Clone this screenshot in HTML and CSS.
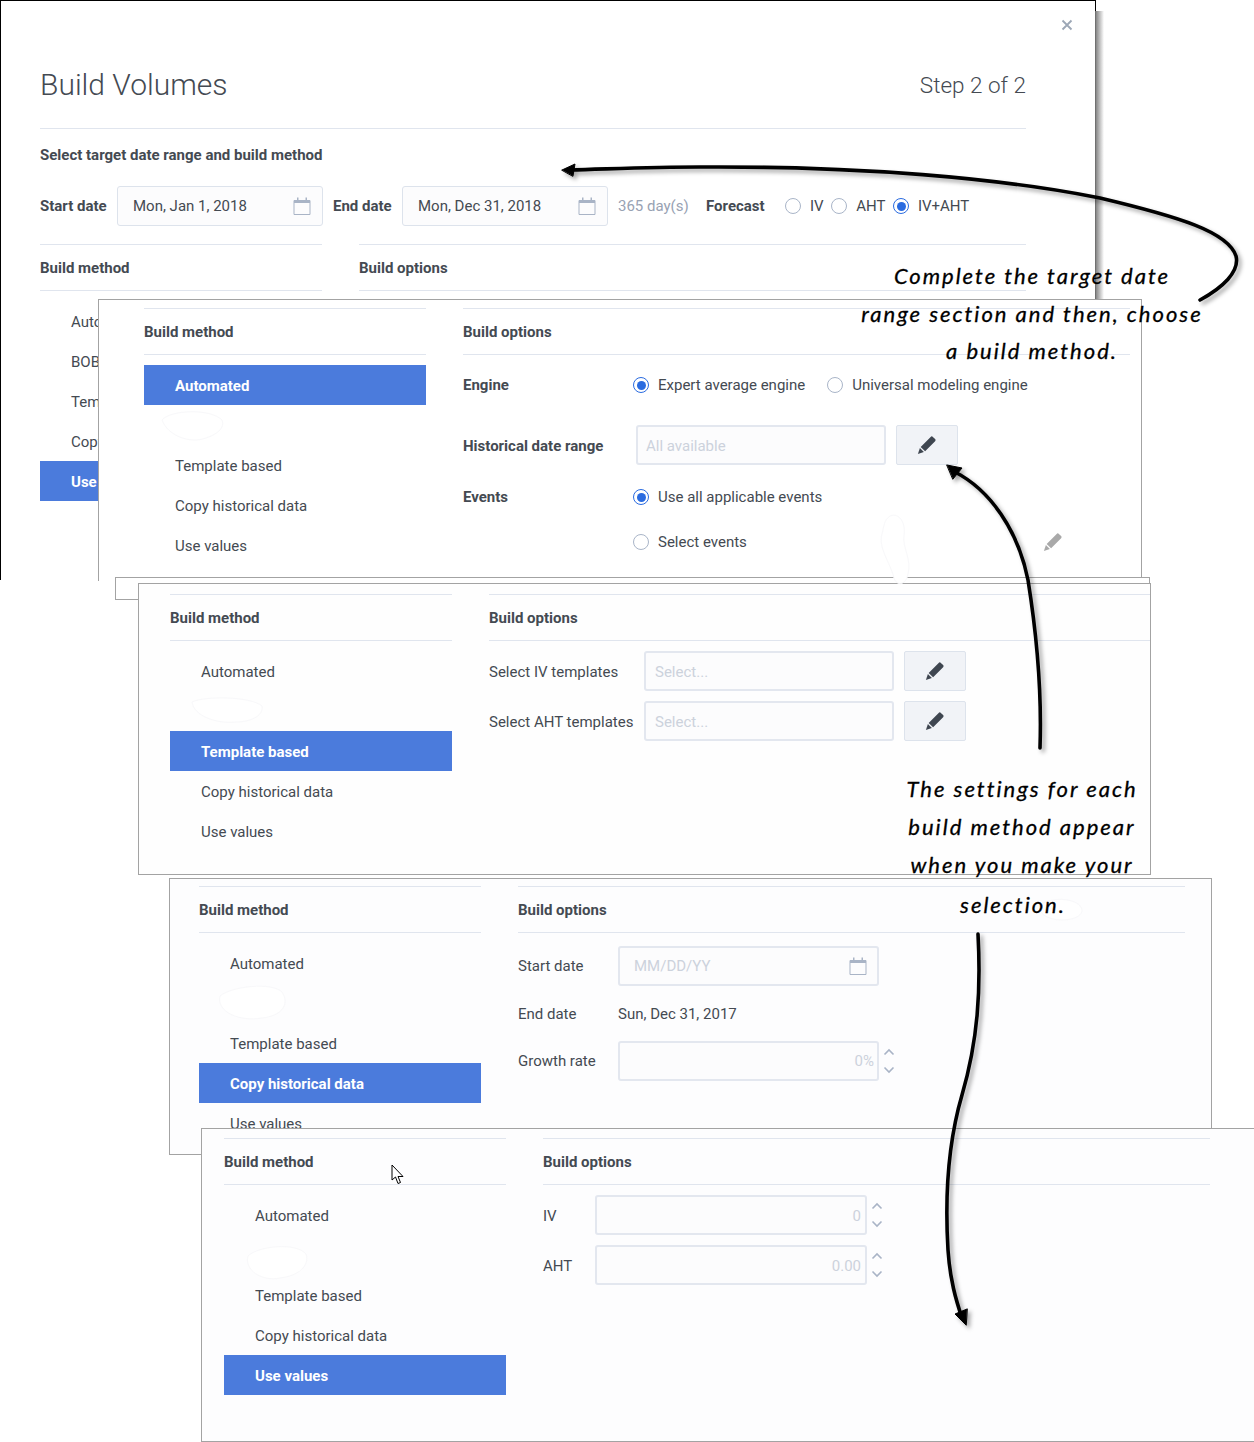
FILE: index.html
```html
<!DOCTYPE html>
<html lang="en">
<head>
  <meta charset="UTF-8">
  <title>Build Volumes</title>
  <link rel="stylesheet" href="styles.css">
</head>
<body>

<svg class="defs" width="0" height="0">
  <symbol id="pencil" viewBox="0 0 18 18">
    <path d="M3.300 10.700 12.300 1.700Q13.300 0.700 14.300 1.700L16.300 3.700Q17.300 4.700 16.300 5.700L7.300 14.700Z"/>
    <path d="M2.600 11.800 6.200 15.400 0.800 17.200Z"/>
  </symbol>
  <symbol id="calendar" viewBox="0 0 18 18">
    <path d="M1 3.500H17V17.500H1Z" fill="none" stroke="currentColor"/>
    <path d="M1 3H4V0.500H5.500V3H12.500V0.500H14V3H17V6H1Z" fill="currentColor"/>
  </symbol>
  <symbol id="spin" viewBox="0 0 12 30">
    <path d="M1.500 8.500 6 4 10.500 8.500M1.500 21.500 6 26 10.500 21.500" fill="none" stroke="currentColor" stroke-width="1.600"/>
  </symbol>
</svg>

<div class="canvas">

  <!-- first dialog, the others are stacked over it -->
  <div class="panel panel-main">
    <div class="close-row">
      <svg class="close" width="12" height="12" viewBox="0 0 12 12"><path d="M1.500 1.500 10.500 10.500M10.500 1.500 1.500 10.500"/></svg>
    </div>
    <div class="title-row">
      <h1>Build Volumes</h1>
      <span class="step">Step 2 of 2</span>
    </div>
    <div class="subtitle">Select target date range and build method</div>
    <div class="date-row">
      <b class="date-label">Start date</b>
      <div class="field date-field"><span>Mon, Jan 1, 2018</span><svg class="cal"><use href="#calendar"/></svg></div>
      <b class="date-label end-label">End date</b>
      <div class="field date-field"><span>Mon, Dec 31, 2018</span><svg class="cal"><use href="#calendar"/></svg></div>
      <span class="days">365 day(s)</span>
      <b class="forecast">Forecast</b>
      <span class="radio first"></span><span class="radio-text">IV</span>
      <span class="radio tight"></span><span class="radio-text">AHT</span>
      <span class="radio on tight"></span><span class="radio-text">IV+AHT</span>
    </div>
    <div class="build">
      <div>
        <div class="col-head">Build method</div>
        <ul class="methods">
          <li>Automated</li>
          <li>BOB</li>
          <li>Template based</li>
          <li>Copy historical data</li>
          <li class="active">Use values</li>
        </ul>
      </div>
      <div>
        <div class="col-head">Build options</div>
      </div>
    </div>
  </div>

  <div class="panel panel-auto">
    <div class="build">
      <div>
        <div class="col-head">Build method</div>
        <ul class="methods">
          <li class="active">Automated</li>
          <li></li>
          <li>Template based</li>
          <li>Copy historical data</li>
          <li>Use values</li>
        </ul>
      </div>
      <div>
        <div class="col-head">Build options</div>
        <div class="opt-row">
          <b class="opt-label wide">Engine</b>
          <span class="radio on"></span><span class="radio-text">Expert average engine</span>
          <span class="radio gap"></span><span class="radio-text">Universal modeling engine</span>
        </div>
        <div class="opt-row spaced">
          <b class="opt-label hist">Historical date range</b>
          <div class="field ph">All available</div>
          <button class="edit"><svg><use href="#pencil"/></svg></button>
        </div>
        <div class="opt-row near">
          <b class="opt-label wide">Events</b>
          <span class="radio on"></span><span class="radio-text">Use all applicable events</span>
        </div>
        <div class="opt-row nearer">
          <span class="opt-label wide"></span>
          <span class="radio"></span><span class="radio-text">Select events</span>
          <svg class="pencil-off"><use href="#pencil"/></svg>
        </div>
      </div>
    </div>
  </div>

  <div class="panel panel-back"></div>

  <div class="panel panel-template">
    <div class="build">
      <div>
        <div class="col-head">Build method</div>
        <ul class="methods">
          <li>Automated</li>
          <li></li>
          <li class="active">Template based</li>
          <li>Copy historical data</li>
          <li>Use values</li>
        </ul>
      </div>
      <div>
        <div class="col-head">Build options</div>
        <div class="opt-row">
          <span class="opt-label tpl">Select IV templates</span>
          <div class="field ph">Select...</div>
          <button class="edit"><svg><use href="#pencil"/></svg></button>
        </div>
        <div class="opt-row">
          <span class="opt-label tpl">Select AHT templates</span>
          <div class="field ph">Select...</div>
          <button class="edit"><svg><use href="#pencil"/></svg></button>
        </div>
      </div>
    </div>
  </div>

  <div class="panel panel-copy">
    <div class="build">
      <div>
        <div class="col-head">Build method</div>
        <ul class="methods">
          <li>Automated</li>
          <li></li>
          <li>Template based</li>
          <li class="active">Copy historical data</li>
          <li>Use values</li>
        </ul>
      </div>
      <div>
        <div class="col-head">Build options</div>
        <div class="opt-row first-copy">
          <span class="opt-label short">Start date</span>
          <div class="field ph copy-field"><span>MM/DD/YY</span><svg class="cal"><use href="#calendar"/></svg></div>
        </div>
        <div class="opt-row end-row">
          <span class="opt-label short">End date</span>
          <span>Sun, Dec 31, 2017</span>
        </div>
        <div class="opt-row">
          <span class="opt-label short">Growth rate</span>
          <div class="field ph num copy-field">0%</div>
          <svg class="spin"><use href="#spin"/></svg>
        </div>
      </div>
    </div>
  </div>

  <div class="panel panel-values">
    <div class="build">
      <div>
        <div class="col-head">Build method</div>
        <ul class="methods">
          <li>Automated</li>
          <li></li>
          <li>Template based</li>
          <li>Copy historical data</li>
          <li class="active">Use values</li>
        </ul>
      </div>
      <div>
        <div class="col-head">Build options</div>
        <div class="opt-row">
          <span class="opt-label tiny">IV</span>
          <div class="field ph num val-field">0</div>
          <svg class="spin"><use href="#spin"/></svg>
        </div>
        <div class="opt-row">
          <span class="opt-label tiny">AHT</span>
          <div class="field ph num val-field">0.00</div>
          <svg class="spin"><use href="#spin"/></svg>
        </div>
      </div>
    </div>
  </div>

  <!-- erased spots, arrows and the mouse cursor -->
  <svg class="overlay" width="1254" height="1442" viewBox="0 0 1254 1442">
    <g class="blobs">
      <path d="M162 420C170 410 210 408 222 420C226 430 212 436 206 438C190 444 168 436 162 420Z"/>
      <path d="M890 516C900 512 906 524 904 536C902 546 912 560 908 574C906 586 896 586 894 578C890 562 878 548 882 534C884 526 884 520 890 516Z"/>
      <path d="M192 702C204 696 250 696 262 706C264 716 250 722 236 722C216 724 194 716 192 702Z"/>
      <path d="M220 996C232 986 272 982 282 992C290 1004 282 1016 262 1018C240 1022 216 1012 220 996Z"/>
      <path d="M248 1256C258 1246 296 1242 306 1254C310 1266 298 1276 280 1278C262 1282 244 1270 248 1256Z"/>
      <path d="M1040 905C1052 896 1080 898 1082 910C1082 920 1060 922 1050 918C1044 916 1038 912 1040 905Z"/>
    </g>
    <g class="arrows">
      <path d="M1200 300C1222 288 1240 272 1236 256C1228 232 1180 217 1100 198C1000 178 860 166 700 167C650 167 610 169 570 170"/>
      <path class="head" d="M562 170 575 164 573 176Z"/>
      <path d="M1040 748C1042 690 1036 630 1028 580C1018 530 990 490 955 472"/>
      <path class="head" d="M947 465 962 468 953 479Z"/>
      <path d="M978 934C981 990 978 1040 962 1095C948 1143 945 1200 948 1250C950 1280 956 1300 962 1318"/>
      <path class="head" d="M966 1325 955 1314 967 1309Z"/>
    </g>
    <path class="cursor" d="M392 1165V1180L395.500 1177L398 1183.500L400.500 1182.500L398 1176.500H403Z"/>
  </svg>

  <div class="note note-top">Complete the target date<br>range section and then, choose<br>a build method.</div>
  <div class="note note-side">The settings for each<br>build method appear<br>when you make your<br><span class="last">selection.</span></div>

</div>

</body>
</html>
```

FILE: styles.css
```css
* { box-sizing: border-box; }
body { margin: 0; background-color: #fff; font-family: Roboto, sans-serif; font-size: 15px; color: #444a52; }
b { font-weight: 700; }
.defs { display: block; position: absolute; }
.canvas { position: relative; width: 1254px; height: 1442px; overflow: hidden; background-color: #fff; }

.panel { position: absolute; background-color: #fff; border: 1px solid #a3a3a3; }
.panel-main { left: 0; top: 0; width: 1096px; height: 580px; padding: 0 69px 0 39px; border-color: #000; border-bottom: none; }
.panel-main::after { content: ""; position: absolute; left: 100%; top: 10px; bottom: 0; width: 9px; background: linear-gradient(to right, #777, rgba(120, 120, 120, 0)); }
.panel-auto { left: 98px; top: 299px; width: 1044px; height: 282px; padding: 8px 0 0 45px; border-bottom: none; }
.panel-back { left: 115px; top: 577px; width: 1035px; height: 23px; }
.panel-template { left: 138px; top: 583px; width: 1013px; height: 292px; padding: 10px 0 0 31px; overflow: hidden; background-color: #fefefe; }
.panel-copy { left: 169px; top: 878px; width: 1043px; height: 277px; padding: 7px 0 0 29px; background-color: #fdfdfe; }
.panel-values { left: 201px; top: 1128px; width: 1053px; height: 314px; padding: 9px 0 0 22px; background-color: #fdfdfe; border-right: none; }

.close-row { display: flex; justify-content: flex-end; height: 50px; padding: 18px 0 0; margin-right: -47px; }
.close { stroke: #9ca7b6; stroke-width: 1.8; }
.title-row { display: flex; justify-content: space-between; align-items: center; margin-top: 16px; padding-bottom: 25px; border-bottom: 1px solid #e0e5ee; height: 62px; }
h1 { margin: 0; font-size: 30px; font-weight: 300; line-height: 36px; color: #444a52; }
.step { font-size: 22.5px; font-weight: 300; color: #444a52; }
.subtitle { margin-top: 16px; font-weight: 700; line-height: 20px; }

.date-row { display: flex; align-items: center; margin-top: 21px; height: 40px; }
.date-label { width: 77px; }
.end-label { width: 69px; margin-left: 10px; }
.days { margin-left: 10px; width: 88px; color: #98a2b3; }
.forecast { width: 79px; }
.radio { flex: none; width: 16px; height: 16px; margin-right: 9px; border: 1px solid #a9b5c8; border-radius: 50%; background-color: #fff; }
.radio.on { border: 1.5px solid #2a6be0; padding: 2.5px; background-color: #2a6be0; background-clip: content-box; }
.radio.first { margin-left: 0; }
.radio.tight { margin-left: 7.5px; }
.radio.gap { margin-left: 22px; }

.field { display: flex; align-items: center; justify-content: space-between; height: 40px; width: 250px; flex: none; padding: 2px 10px 0 9px; border: 2px solid #e3e7ef; border-radius: 3px; background-color: #fcfcfd; }
.field.date-field { width: 206px; padding: 0 11px 0 15px; border-width: 1px; border-color: #dde3ec; color: #444a52; }
.panel-auto .field { padding-left: 8px; }
.ph { color: #ccd2dc; }
.field.num { justify-content: flex-end; padding-right: 3px; }
.field.copy-field { width: 261px; padding: 0 10px 0 14px; }
.field.copy-field.num { padding-right: 3px; }
.field.val-field { width: 272px; padding-right: 4px; }
.cal { width: 18px; height: 18px; color: #a9b4c6; }

.build { display: grid; grid-template-columns: 282px 667px; gap: 37px; margin-top: 18px; }
.panel .build:first-child { margin-top: 0; }
.col-head { height: 47px; line-height: 47px; font-weight: 700; border-top: 1px solid #e0e5ee; border-bottom: 1px solid #e0e5ee; }

.methods { list-style: none; margin: 10px 0 0; padding: 0; }
.methods li { height: 40px; line-height: 42px; padding-left: 31px; white-space: nowrap; }
.methods li.active { background-color: #4b7bdc; color: #fff; font-weight: 700; line-height: 43px; }

.opt-row { display: flex; align-items: center; height: 40px; margin-top: 10px; white-space: nowrap; }
.opt-row.spaced { margin-top: 20px; }
.opt-row.near { margin-top: 12px; }
.opt-row.nearer { margin-top: 5px; }
.opt-row.first-copy { margin-top: 13px; }
.opt-row.end-row { margin-top: 8px; margin-bottom: -3px; }
.opt-label { flex: none; }
.opt-label.wide { width: 170px; }
.opt-label.hist { width: 173px; padding-top: 2px; }
.opt-label.tpl { width: 155px; padding-top: 2px; }
.opt-label.short { width: 100px; }
.opt-label.tiny { width: 52px; padding-top: 2px; }

.edit { flex: none; display: flex; align-items: center; justify-content: center; width: 62px; height: 40px; margin-left: 10px; padding: 0; border: 1px solid #dde3ec; border-radius: 2px; background-color: #f1f3f7; }
.edit svg { width: 20px; height: 20px; fill: #3f4650; }
.pencil-off { width: 20px; height: 20px; margin-left: 296px; fill: #a9a9a9; }
.spin { width: 12px; height: 30px; margin-left: 4px; color: #a9b4c6; }

.overlay { position: absolute; left: 0; top: 0; pointer-events: none; }
.blobs path { fill: #fff; stroke: #f8f8fa; stroke-width: 1; }
.arrows { filter: drop-shadow(3px 3px 2px rgba(0, 0, 0, 0.35)); }
.arrows path { fill: none; stroke: #000; stroke-width: 3.6; stroke-linecap: round; }
.arrows path.head { fill: #000; stroke-width: 1; }
.cursor { fill: #fff; stroke: #000; stroke-width: 1; }

.note { position: absolute; text-align: center; color: #000; font-family: Lato, sans-serif; font-style: italic; font-size: 22px; letter-spacing: 2px; line-height: 38px; white-space: nowrap; -webkit-text-stroke: 0.3px #000; }
.note-top { left: 832px; top: 257px; width: 400px; line-height: 37.5px; }
.note-side { left: 822px; top: 770px; width: 400px; }
.note-side .last { position: relative; left: -9px; top: 2px; }
```
